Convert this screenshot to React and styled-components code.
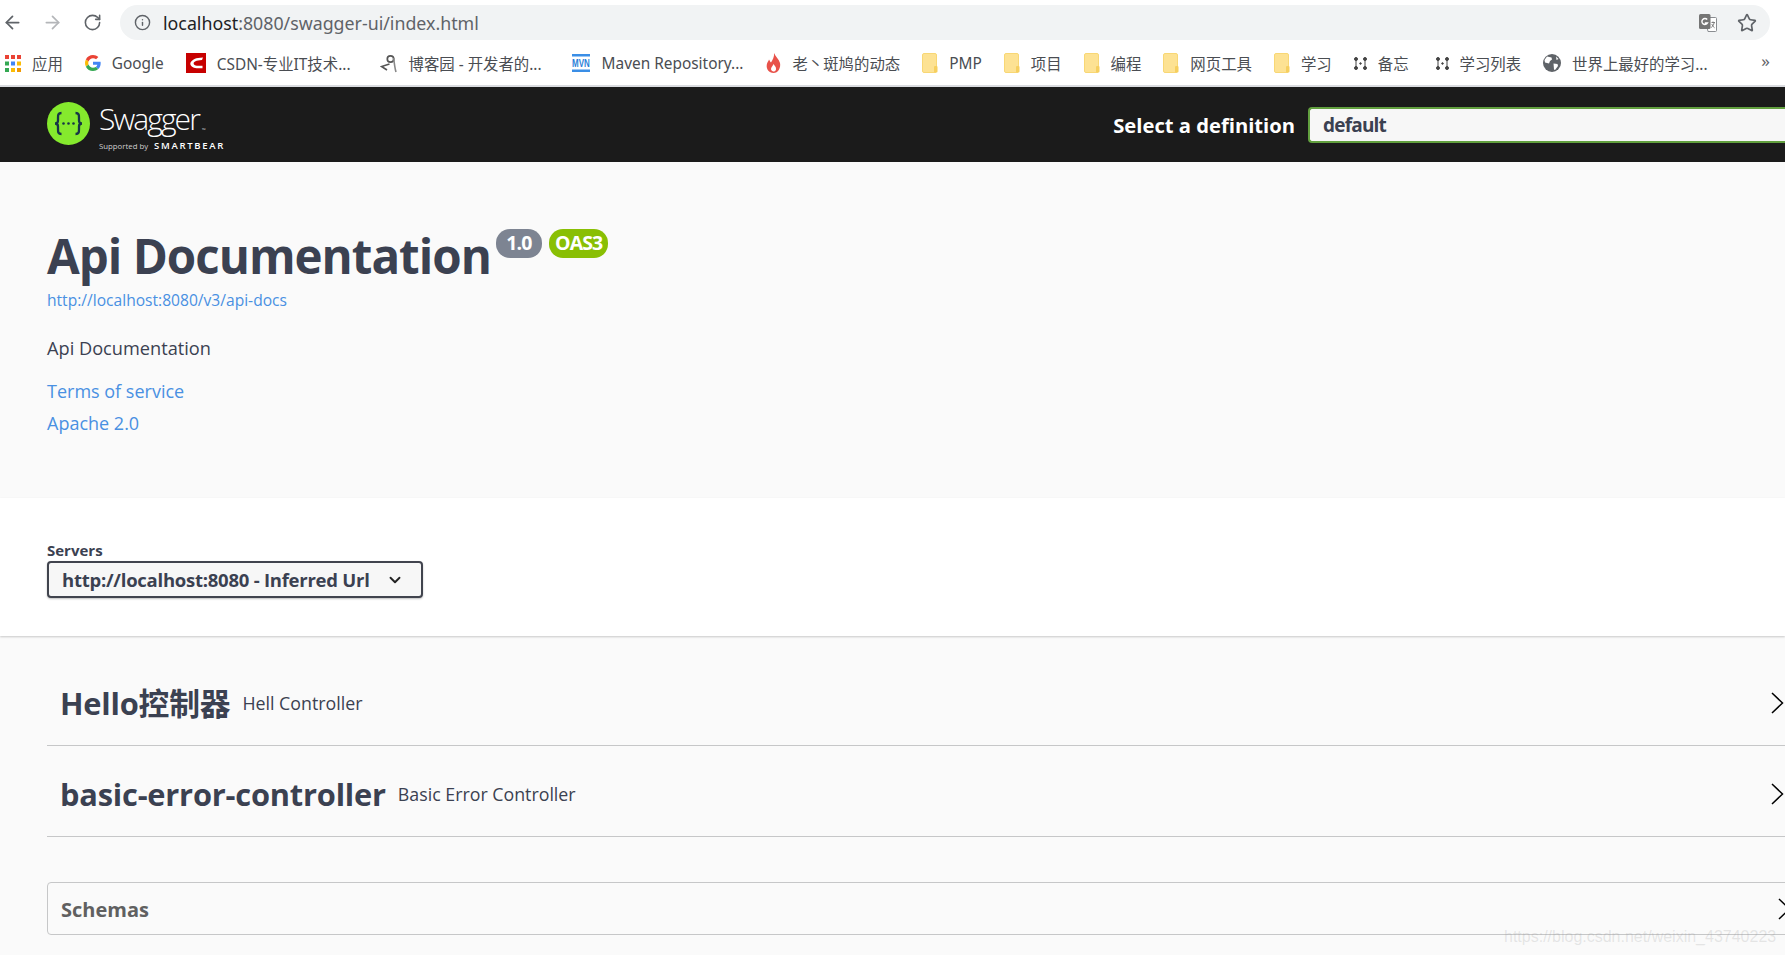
import React from "react";
import styled, { createGlobalStyle } from "styled-components";
import { ArrowLeft, ArrowRight, RotateCw, Info, Star, ChevronDown } from "lucide-react";

const UI_FONT = `"Open Sans", "Noto Sans CJK SC", sans-serif`;
const CHROME_FONT = `"Noto Sans", "Noto Sans CJK SC", sans-serif`;

const GlobalStyle = createGlobalStyle`
  html, body {
    margin: 0;
    padding: 0;
    height: 100%;
    overflow: hidden;
    background: #fafafa;
  }
  * { box-sizing: border-box; }
`;

const Page = styled.div`
  position: relative;
  width: 1785px;
  height: 955px;
  overflow: hidden;
  background: #fafafa;
  font-family: ${UI_FONT};
  color: #3b4151;
`;

const AddressRow = styled.div`
  height: 40px;
  padding-top: 5px;
  display: flex;
  align-items: flex-start;
  background: #fff;
`;

const NavButton = styled.div`
  width: 40px;
  height: 35px;
  display: flex;
  align-items: center;
  justify-content: center;
  color: ${(p) => (p.$off ? "#b4b6b9" : "#5f6368")};
`;

const NavButtons = styled.div`
  display: flex;
  width: 120px;
  margin-left: -8px;
  margin-right: 8px;
`;

const AddressBar = styled.div`
  width: 1650px;
  height: 35px;
  border-radius: 18px;
  background: #f1f3f4;
  display: flex;
  align-items: center;
  padding: 0 13px 0 14px;
  color: #5f6368;
`;

const Url = styled.div`
  flex: 1;
  margin-left: 12px;
  font-family: ${CHROME_FONT};
  font-size: 17.8px;
  color: #5f6368;
  b {
    font-weight: 400;
    color: #202124;
  }
`;

const AddressIcons = styled.div`
  display: flex;
  align-items: center;
  gap: 19px;
`;

const BookmarkBar = styled.div`
  height: 45px;
  padding: 1px 0 0 5px;
  background: #fff;
  display: flex;
  align-items: center;
  gap: 22px;
  font-family: ${CHROME_FONT};
  font-size: 15.4px;
  color: #4a4d52;
  position: relative;
`;

const Bookmark = styled.div`
  display: flex;
  align-items: center;
  gap: 11px;
  white-space: nowrap;
  margin-right: ${(p) => p.$extra || 0}px;
  svg { flex: none; }
`;

const More = styled.div`
  position: absolute;
  right: 15px;
  top: 9px;
  font-size: 17px;
  color: #5f6368;
`;

const TopBar = styled.div`
  height: 77px;
  border-top: 2px solid #dadce0;
  background: #1b1b1b;
  display: flex;
  align-items: center;
  padding-left: 47px;
`;

const Logo = styled.div`
  display: flex;
  align-items: center;
  gap: 9px;
  color: #fff;
  padding-bottom: 3px;
  margin-right: auto;
`;

const LogoText = styled.div`
  display: flex;
  flex-direction: column;
`;

const LogoName = styled.div`
  font-size: 30px;
  font-weight: 300;
  line-height: 30px;
  letter-spacing: -1.9px;
  sup {
    font-size: 5px;
    letter-spacing: 0;
    vertical-align: -2px;
    margin-left: 3px;
  }
`;

const LogoBy = styled.div`
  margin-top: -5px;
  margin-bottom: -9px;
  font-size: 7.8px;
  line-height: 12px;
  color: #cfcfcf;
  white-space: nowrap;
  b {
    font-size: 9.5px;
    font-weight: 600;
    letter-spacing: 1.7px;
    color: #fff;
    margin-left: 6px;
  }
`;

const DefinitionLabel = styled.label`
  font-size: 20.2px;
  font-weight: 700;
  color: #fff;
  white-space: nowrap;
  margin-right: 13px;
`;

const DefinitionSelect = styled.div`
  flex: none;
  width: 490px;
  margin-right: -13px;
  height: 36px;
  border: 2px solid #62a03f;
  border-right: 0;
  border-radius: 4px 0 0 4px;
  background: #f7f7f7;
  font-size: 19px;
  font-weight: 700;
  line-height: 32px;
  letter-spacing: -0.8px;
  padding-left: 13px;
  color: #3b4151;
`;

const InfoSection = styled.section`
  height: 336px;
  padding: 64px 0 0 47px;
  background: #fafafa;
`;

const TitleRow = styled.div`
  display: flex;
  align-items: flex-start;
  height: 60px;
`;

const Title = styled.h1`
  margin: 0;
  font-size: 47.5px;
  line-height: 60px;
  font-weight: 700;
  letter-spacing: -1px;
  color: #3b4151;
`;

const Badge = styled.span`
  height: 29px;
  margin-top: 3px;
  margin-left: ${(p) => p.$gap}px;
  padding: 0 ${(p) => p.$pad}px;
  border-radius: 14px;
  background: ${(p) => p.$color};
  color: #fff;
  font-size: 19.5px;
  font-weight: 700;
  line-height: 28px;
  letter-spacing: -0.9px;
`;

const SpecLink = styled.a`
  display: block;
  margin-top: 2px;
  font-size: 15.6px;
  line-height: 24px;
  color: #4990e2;
`;

const Description = styled.p`
  margin: 23px 0 16px;
  font-size: 18.2px;
  line-height: 26px;
  color: #3b4151;
`;

const InfoLink = styled.a`
  display: block;
  font-size: 18px;
  line-height: 28px;
  margin-bottom: 4px;
  color: #4990e2;
`;

const ServersSection = styled.section`
  height: 138px;
  padding: 42px 0 0 47px;
  background: #fff;
  box-shadow: 0 1px 2px rgba(0, 0, 0, 0.2);
  position: relative;
`;

const ServersLabel = styled.div`
  font-size: 15px;
  line-height: 20px;
  font-weight: 700;
`;

const ServerSelect = styled.div`
  width: 376px;
  height: 37px;
  margin-top: 1px;
  padding: 0 17px 0 13px;
  border: 2px solid #41444e;
  border-radius: 4px;
  background: #f7f7f7;
  box-shadow: 0 1px 2px rgba(0, 0, 0, 0.25);
  display: flex;
  align-items: center;
  justify-content: space-between;
  font-size: 18.5px;
  font-weight: 700;
  letter-spacing: -0.25px;
  white-space: nowrap;
`;

const Tags = styled.div`
  padding: 25px 0 0 47px;
  display: flex;
  flex-direction: column;
  gap: 6px;
`;

const TagRow = styled.div`
  height: 85px;
  padding: 0 1px 0 13px;
  border-bottom: 1px solid #c6c7c8;
  display: flex;
  align-items: center;
  justify-content: space-between;
`;

const TagName = styled.div`
  display: flex;
  align-items: center;
  gap: 12px;
  color: #3b4151;
`;

const TagTitle = styled.h3`
  margin: 0;
  font-size: 30.8px;
  line-height: 40px;
  font-weight: 700;
  letter-spacing: -0.2px;
`;

const TagDescription = styled.small`
  font-size: 17.8px;
  font-weight: 400;
`;

const SchemasBox = styled.section`
  height: 53px;
  margin: 45px -25px 0 47px;
  padding: 0 18px 0 13px;
  border: 1px solid #c6c7c8;
  border-radius: 4px;
  display: flex;
  align-items: center;
  justify-content: space-between;
`;

const SchemasTitle = styled.h4`
  margin: 2px 0 0;
  font-size: 20px;
  font-weight: 700;
  color: #606060;
`;

const Watermark = styled.div`
  position: absolute;
  left: 1504px;
  top: 927px;
  font-family: "Liberation Sans", sans-serif;
  font-size: 16px;
  line-height: 20px;
  color: rgba(150, 150, 150, 0.22);
  white-space: nowrap;
`;

const AppsIcon = () => {
  const colors = ["#ea4335", "#ea4335", "#ea4335", "#34a853", "#4285f4", "#fbbc05", "#34a853", "#fbbc05", "#f29900"];
  return (
    <svg width="16" height="17" viewBox="0 0 16 17">
      {colors.map((c, i) => (
        <rect key={i} x={(i % 3) * 6} y={Math.floor(i / 3) * 6.5} width="4" height="4" fill={c} />
      ))}
    </svg>
  );
};

const GoogleIcon = () => (
  <svg width="16" height="16" viewBox="0 0 48 48">
    <path fill="#EA4335" d="M24 9.5c3.5 0 6.7 1.2 9.2 3.6l6.9-6.9C35.9 2.400 30.500 0 24 0 14.600 0 6.500 5.400 2.600 13.200l8 6.200C12.500 13.600 17.800 9.500 24 9.500z" />
    <path fill="#4285F4" d="M47 24.500c0-1.600-.1-3.100-.4-4.500H24v9h13c-.6 3-2.200 5.500-4.800 7.200l7.700 6C44.400 38 47 31.800 47 24.500z" />
    <path fill="#FBBC05" d="M10.500 28.600C10 27.200 9.800 25.600 9.800 24s.3-3.200.8-4.600l-8-6.200C.9 16.500 0 20.100 0 24s.9 7.500 2.600 10.800l7.900-6.200z" />
    <path fill="#34A853" d="M24 48c6.500 0 11.900-2.100 15.900-5.800l-7.700-6c-2.200 1.500-4.900 2.300-8.200 2.300-6.200 0-11.500-4.200-13.400-9.800l-8 6.200C6.500 42.600 14.600 48 24 48z" />
  </svg>
);

const CsdnIcon = () => (
  <svg width="20" height="20" viewBox="0 0 20 20">
    <rect width="20" height="20" fill="#c70000" />
    <path d="M17 4.500C13 4.800 10.500 5 9 5.800 6.500 7 4.300 8.700 4.300 10.500 4.300 13 7 15 10.500 15.300H16.500V12.800H11C9 12.500 7.600 11.500 7.600 10.200 7.600 8.800 10 7.500 16 7z" fill="#fff" />
  </svg>
);

const BlogIcon = () => (
  <svg width="18" height="20" viewBox="0 0 18 20" fill="none" stroke="#555">
    <circle cx="10.500" cy="6" r="3.200" strokeWidth="1.700" />
    <path d="M13.700 5C14.200 10 14.800 15 16 19" strokeWidth="1.600" stroke="#888" />
    <path d="M9.500 11L1.500 13.500 7 17" strokeWidth="1.600" />
  </svg>
);

const MvnIcon = () => (
  <svg width="20" height="20" viewBox="0 0 20 20">
    <rect x="1" y="1" width="18" height="2.500" fill="#3a8ee6" />
    <rect x="1" y="16.500" width="18" height="2.500" fill="#3a8ee6" />
    <text x="1.250" y="14" transform="scale(0.8 1)" fontFamily="Liberation Sans" fontWeight="700" fontSize="10" fill="#2a7fd8">MVN</text>
  </svg>
);

const FireIcon = () => (
  <svg width="15" height="20" viewBox="0 0 15 20">
    <path fill="#e8524a" d="M8 0c1 3 5 6 6 10 1 5-2 10-6.500 10S0 16 .8 11.500C1.200 9.500 2.500 8 3 6.500 4 8 4.300 9 5 9.500 6.500 7 8.500 4 8 0z" />
    <path fill="#fff" d="M7.500 11c1 2 3 3 2.500 5.500-.3 1.500-1.500 2-2.500 2S5 17.500 5 16c0-2 2-3 2.500-5z" />
  </svg>
);

const FolderIcon = () => (
  <svg width="16" height="20" viewBox="0 0 16 20">
    <rect x=".5" y=".5" width="14" height="19" rx="1.500" fill="#fde293" stroke="#f8d775" />
    <rect x="12" y="13" width="3.500" height="6.500" rx="1" fill="#f6cf5f" />
  </svg>
);

const NodesIcon = () => (
  <svg width="13" height="13" viewBox="0 0 13 13" fill="#444" stroke="#444">
    <circle cx="2" cy="2" r="1.500" />
    <circle cx="2" cy="11" r="1.500" />
    <circle cx="11" cy="2" r="1.500" />
    <circle cx="11" cy="11" r="1.500" />
    <circle cx="6.500" cy="6.500" r=".8" />
    <path d="M2 2v9M11 2v9" fill="none" />
  </svg>
);

const GlobeIcon = () => (
  <svg width="18" height="18" viewBox="0 0 18 18">
    <circle cx="9" cy="9" r="9" fill="#5f6368" />
    <path fill="#fff" d="M4 2.500l4.500 1 .5 2-2 1.500-1 2.500L2 8.500 1.500 6zM10.500 9.500l4 .5.500 2-3 4-1-.5z M13 2.500l2.500 2.500-2 1z" />
  </svg>
);

const TranslateIcon = () => (
  <svg width="20" height="20" viewBox="0 0 20 20">
    <path d="M7 4.500h10.500a1 1 0 0 1 1 1v12a1 1 0 0 1-1 1H10z" fill="#fff" stroke="#8a8d91" />
    <rect x="1" y="1" width="11.500" height="15" rx="1.500" fill="#757575" />
    <path d="M9.200 6.500a3 3 0 1 0 .3 3.500H6.800" fill="none" stroke="#fff" strokeWidth="1.400" />
    <path d="M13.500 9.500h3.500M15 8.500v1M16.200 9.500c-.5 2.500-1.500 4-3 5M13.800 11c.5 1.500 1.500 3 2.800 3.800" fill="none" stroke="#757575" strokeWidth=".9" />
  </svg>
);

const SwaggerMark = () => (
  <svg width="43" height="43" viewBox="0 0 43 43">
    <circle cx="21.500" cy="21.500" r="21.500" fill="#85ea2d" />
    <g fill="none" stroke="#173647" strokeWidth="2.300">
      <path d="M14.500 11c-3.500 0-3.500 2-3.500 5v2.500c0 2-1 3-3 3 2 0 3 1 3 3V27c0 3 0 5 3.500 5" />
      <path d="M28.500 11c3.500 0 3.500 2 3.500 5v2.500c0 2 1 3 3 3-2 0-3 1-3 3V27c0 3 0 5-3.500 5" />
    </g>
    <g fill="#173647">
      <circle cx="16.500" cy="21.500" r="1.300" />
      <circle cx="21.500" cy="21.500" r="1.300" />
      <circle cx="26.500" cy="21.500" r="1.300" />
    </g>
  </svg>
);

const RowChevron = () => (
  <svg width="13" height="22" viewBox="0 0 13 22" fill="none" stroke="#000" strokeWidth="1.500">
    <path d="M1 1l10.500 10L1 21" />
  </svg>
);

const BOOKMARKS = [
  { icon: <AppsIcon />, label: "应用" },
  { icon: <GoogleIcon />, label: "Google" },
  { icon: <CsdnIcon />, label: "CSDN-专业IT技术...", extra: 7 },
  { icon: <BlogIcon />, label: "博客园 - 开发者的...", extra: 7 },
  { icon: <MvnIcon />, label: "Maven Repository...", extra: 1 },
  { icon: <FireIcon />, label: "老丶斑鸠的动态" },
  { icon: <FolderIcon />, label: "PMP" },
  { icon: <FolderIcon />, label: "项目" },
  { icon: <FolderIcon />, label: "编程" },
  { icon: <FolderIcon />, label: "网页工具" },
  { icon: <FolderIcon />, label: "学习" },
  { icon: <NodesIcon />, label: "备忘", extra: 5 },
  { icon: <NodesIcon />, label: "学习列表" },
  { icon: <GlobeIcon />, label: "世界上最好的学习..." },
];

const TAGS = [
  { name: "Hello控制器", description: "Hell Controller" },
  { name: "basic-error-controller", description: "Basic Error Controller" },
];

export default function App() {
  return (
    <Page>
      <GlobalStyle />
      <AddressRow>
        <NavButtons>
          <NavButton><ArrowLeft size={21} /></NavButton>
          <NavButton $off><ArrowRight size={21} /></NavButton>
          <NavButton><RotateCw size={19} /></NavButton>
        </NavButtons>
        <AddressBar>
          <Info size={17} />
          <Url><b>localhost</b>:8080/swagger-ui/index.html</Url>
          <AddressIcons>
            <TranslateIcon />
            <Star size={20} />
          </AddressIcons>
        </AddressBar>
      </AddressRow>
      <BookmarkBar>
        {BOOKMARKS.map((b) => (
          <Bookmark key={b.label} $extra={b.extra}>
            {b.icon}
            <span>{b.label}</span>
          </Bookmark>
        ))}
        <More>»</More>
      </BookmarkBar>
      <TopBar>
        <Logo>
          <SwaggerMark />
          <LogoText>
            <LogoName>Swagger<sup>™</sup></LogoName>
            <LogoBy>Supported by<b>SMARTBEAR</b></LogoBy>
          </LogoText>
        </Logo>
        <DefinitionLabel>Select a definition</DefinitionLabel>
        <DefinitionSelect>default</DefinitionSelect>
      </TopBar>
      <InfoSection>
        <TitleRow>
          <Title>Api Documentation</Title>
          <Badge $gap={5} $pad={10.5} $color="#7d8492">1.0</Badge>
          <Badge $gap={7} $pad={6} $color="#89bf04">OAS3</Badge>
        </TitleRow>
        <SpecLink>http://localhost:8080/v3/api-docs</SpecLink>
        <Description>Api Documentation</Description>
        <InfoLink>Terms of service</InfoLink>
        <InfoLink>Apache 2.0</InfoLink>
      </InfoSection>
      <ServersSection>
        <ServersLabel>Servers</ServersLabel>
        <ServerSelect>
          http://localhost:8080 - Inferred Url
          <ChevronDown size={18} strokeWidth={2.5} color="#222" />
        </ServerSelect>
      </ServersSection>
      <Tags>
        {TAGS.map((t) => (
          <TagRow key={t.name}>
            <TagName>
              <TagTitle>{t.name}</TagTitle>
              <TagDescription>{t.description}</TagDescription>
            </TagName>
            <RowChevron />
          </TagRow>
        ))}
      </Tags>
      <SchemasBox>
        <SchemasTitle>Schemas</SchemasTitle>
        <RowChevron />
      </SchemasBox>
      <Watermark>https://blog.csdn.net/weixin_43740223</Watermark>
    </Page>
  );
}
